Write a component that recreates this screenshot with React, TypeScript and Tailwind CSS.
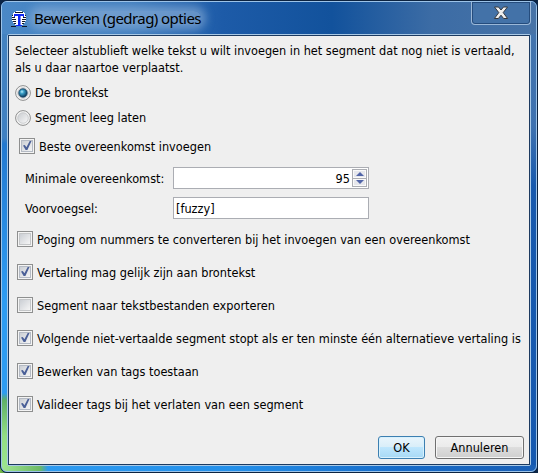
import React from 'react';

type TextProps = { children: React.ReactNode; className?: string };

function T({ children, className = '' }: TextProps) {
  return <span className={'whitespace-pre ' + className}>{children}</span>;
}

function Check({ on }: { on?: boolean }) {
  return (
    <svg width="16" height="16" viewBox="0 0 16 16" className="shrink-0">
      <defs>
        <linearGradient id="box" x1="0" y1="0" x2="1" y2="1">
          <stop offset="0" stopColor="#c9cdd3" />
          <stop offset="1" stopColor="#f7f7f7" />
        </linearGradient>
      </defs>
      <rect x=".5" y=".5" width="15" height="15" fill="#f4f4f4" stroke="#8e8f8f" />
      <rect x="2.5" y="2.5" width="11" height="11" fill="url(#box)" stroke={on ? '#b4bac4' : '#c4c6c8'} />
      {on && <path d="M4 7.500l1.800-.6 1.600 2.300L10.700 3h1.800L8.400 12H6.600z" fill="#4a5f97" />}
    </svg>
  );
}

function Radio({ on }: { on?: boolean }) {
  return (
    <svg width="16" height="16" viewBox="0 0 16 16" className="shrink-0">
      <defs>
        <linearGradient id="ring" x1="0" y1="0" x2="1" y2="1">
          <stop offset="0" stopColor="#c9ccd0" />
          <stop offset="1" stopColor="#f8f8f8" />
        </linearGradient>
        <radialGradient id="dot" cx=".38" cy=".35" r=".65">
          <stop offset="0" stopColor="#b9ecfb" />
          <stop offset=".35" stopColor="#3aa0c8" />
          <stop offset="1" stopColor="#0b3a5e" />
        </radialGradient>
      </defs>
      <circle cx="8" cy="8" r="7.4" fill="#f4f4f4" stroke="#8e8f8f" />
      <circle cx="8" cy="8" r="5.3" fill="url(#ring)" stroke="#c3c5c8" strokeWidth=".8" />
      {on && <circle cx="8" cy="8" r="4.2" fill="url(#dot)" stroke="#15405f" strokeWidth=".8" />}
    </svg>
  );
}

function AppIcon() {
  return (
    <svg width="16" height="16" viewBox="0 0 16 16" className="relative shrink-0" shapeRendering="crispEdges">
      <path d="M5 0h6v1h2v1h1v2h1v6h-1v2h-2v2h-1v1H5v-1H4v-2H2v-2H1V4h1V2h1V1h2z" fill="#fff" />
      <path d="M4 1.500h8M1 4.500h1M14 4.500h1M1 6.500h3M12 6.500h3M1 8.500h4M11 8.500h4M2 10.500h3M11 10.500h3M3 12.500h2M11 12.500h2M0 15.500h5M11 15.500h5" stroke="#101828" />
      <path d="M3 3h10v3h-1V5H9v9h2v1H5v-1h2V5H4v1H3z" fill="#1028f0" />
      <path d="M9 5h1v9H9z" fill="#7f8cf8" />
    </svg>
  );
}

const options = [
  { text: 'Poging om nummers te converteren bij het invoegen van een overeenkomst', on: false },
  { text: 'Vertaling mag gelijk zijn aan brontekst', on: true },
  { text: 'Segment naar tekstbestanden exporteren', on: false },
  { text: 'Volgende niet-vertaalde segment stopt als er ten minste één alternatieve vertaling is', on: true },
  { text: 'Bewerken van tags toestaan', on: true },
  { text: 'Valideer tags bij het verlaten van een segment', on: true },
];

export default function App() {
  return (
    <div className="h-[473px] w-[538px] overflow-hidden bg-[linear-gradient(180deg,#0b2444_0,#0b2444_440px,#0b244400_450px),linear-gradient(90deg,#7ac143_0,#123a66_12px,#0b2444_100%)] font-['DejaVu_Sans_Condensed','DejaVu_Sans',sans-serif] text-[12.6px] leading-[17px] text-black [font-stretch:condensed]">
      <div className="h-full rounded-[7px] border border-[#0c2340] bg-[#1759a8]">
        <div
          className="flex h-full flex-col rounded-[6px] border border-[#9cc3e8] bg-[linear-gradient(90deg,#a0e591_0,#6cb965_38px,#2d9af0_46px,#2490ea_230px,#176bc8_400px,#1a5fb5_100%),linear-gradient(180deg,#4583c0_0,#3f80c2_136px,#2379d0_142px,#2e9cf2_300px,#2e9cf2_391px,#5fb068_398px,#93dd83_434px,#9be590_100%),linear-gradient(180deg,#4475ad_0,#3e72b0_124px,#1759ad_184px,#1559b0_100%)] bg-no-repeat px-[5px] pb-[5px] [background-position:left_bottom,left_top,right_top] [background-size:100%_6px,6px_100%,6px_100%]"
        >
          <div className="-mx-[5px] flex h-8 shrink-0 justify-between rounded-t-[5px] bg-[linear-gradient(90deg,#4a88c6_0,#3f7dbe_130px,#1d5ba8_220px,#12529c_330px,#3c6ca5_430px,#4773a7_100%)] px-[5px]">
            <div className="flex h-8 items-center pl-1">
              <div className="relative z-10 mt-[1px]"><AppIcon /></div>
              <div className="ml-[7px] flex h-[14px] items-center rounded-[7px] bg-[#8db0d8]/60 shadow-[0_0_8px_5px_rgba(141,176,216,0.6)]">
                <T className="font-['Noto_Sans'] text-[15px] tracking-[-0.57px] [font-stretch:normal]">Bewerken (gedrag) opties</T>
              </div>
            </div>
            <div className="flex h-[23px] w-[60px] items-center justify-center rounded-b-[4px] border border-t-0 border-[#9bb8d8] bg-[#4372a8] shadow-[inset_0_0_0_1px_#254c7d]">
              <svg width="16" height="14" viewBox="0 0 16 14">
                <path d="M1.500 1H5.500L8 4 10.500 1h4L10.200 6.600 14.600 12.500H10.600L8 9.200 5.400 12.500H1.400L5.800 6.600z" fill="#eee" stroke="#34383f" strokeWidth="1" />
              </svg>
            </div>
          </div>

          <div className="min-h-0 flex-1 rounded-[2px] border border-[#a9c9e6]">
            <div className="flex h-full flex-col border border-[#1c3a60] bg-[#efefef] pl-[6px] pr-[5px] pt-[6px]">
              <div className="flex flex-col items-start">
                <T className="tracking-[-0.01px]">Selecteer alstublieft welke tekst u wilt invoegen in het segment dat nog niet is vertaald,</T>
                <T>als u daar naartoe verplaatst.</T>
              </div>
              <div className="mt-1 flex h-[25px] items-center gap-1"><Radio on /><T>De brontekst</T></div>
              <div className="flex h-[25px] items-center gap-1"><Radio /><T>Segment leeg laten</T></div>
              <div className="flex h-8 items-center gap-1 pl-1"><Check on /><T>Beste overeenkomst invoegen</T></div>

              <div className="mt-[5px] flex h-[22px] items-center pl-[10px]">
                <div className="flex w-[148px]"><T>Minimale overeenkomst:</T></div>
                <div className="flex h-[22px] w-[196px] items-center justify-end border border-[#abadb3] bg-white pr-[1px]">
                  <T className="mr-[2px]">95</T>
                  <div className="flex h-[18px] w-[15px] flex-col gap-[1px] border border-[#abadb3] bg-[#abadb3]">
                    <div className="flex flex-1 items-center justify-center border border-[#fafafa] bg-[#e6e7ec]">
                      <svg width="8" height="4" viewBox="0 0 8 4"><path d="M0 4L4 0l4 4z" fill="#5165a8" /></svg>
                    </div>
                    <div className="flex flex-1 items-center justify-center border border-[#fafafa] bg-[#e6e7ec]">
                      <svg width="8" height="4" viewBox="0 0 8 4"><path d="M0 0h8L4 4z" fill="#5165a8" /></svg>
                    </div>
                  </div>
                </div>
              </div>
              <div className="mt-2 flex h-[22px] items-center pl-[10px]">
                <div className="flex w-[148px]"><T>Voorvoegsel:</T></div>
                <div className="flex h-[22px] w-[196px] items-center border border-[#abadb3] bg-white pl-[2px]"><T>[fuzzy]</T></div>
              </div>

              <div className="mt-3 flex flex-col gap-[17px] pl-[2px]">
                {options.map((o) => (
                  <div key={o.text} className="flex h-4 items-center gap-1"><Check on={o.on} /><T>{o.text}</T></div>
                ))}
              </div>

              <div className="mt-6 flex justify-end gap-[10px]">
                <button className="flex h-[23px] w-[47px] items-center justify-center rounded-[3px] border border-[#3c7fb1] bg-[linear-gradient(180deg,#e9f5fc_0,#d9eef9_48%,#bee6fd_50%,#a7d9f5_100%)] shadow-[inset_0_0_0_1px_#d8f1fd]"><T>OK</T></button>
                <button className="flex h-[23px] w-[89px] items-center justify-center rounded-[3px] border border-[#707070] bg-[linear-gradient(180deg,#f2f2f2_0,#ebebeb_48%,#dddddd_50%,#cfcfcf_100%)] shadow-[inset_0_0_0_1px_#f6f6f6]"><T>Annuleren</T></button>
              </div>
            </div>
          </div>
        </div>
      </div>
    </div>
  );
}
